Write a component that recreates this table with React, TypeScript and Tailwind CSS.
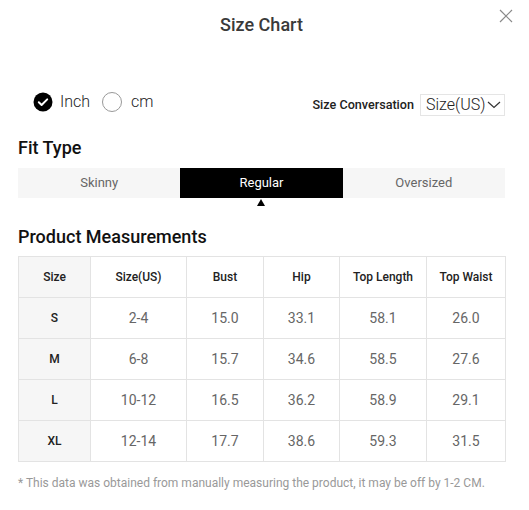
import React from "react";

const rows = [
  ["S", "2-4", "15.0", "33.1", "58.1", "26.0"],
  ["M", "6-8", "15.7", "34.6", "58.5", "27.6"],
  ["L", "10-12", "16.5", "36.2", "58.9", "29.1"],
  ["XL", "12-14", "17.7", "38.6", "59.3", "31.5"],
];
const headers = ["Size", "Size(US)", "Bust", "Hip", "Top Length", "Top Waist"];
const widths = ["w-[72px]", "w-[96px]", "w-[77px]", "w-[76px]", "w-[87px]", "w-[79px]"];

export default function App() {
  return (
    <div className="relative w-[529px] h-[510px] bg-white overflow-hidden font-['Roboto',sans-serif]">
      <button className="absolute left-[499px] top-[9px] w-[14px] h-[14px]">
        <svg width="14" height="14" viewBox="0 0 14 14" fill="none" stroke="#8a8a8a" strokeWidth="1.2">
          <path d="M1 1 L13 13 M13 1 L1 13" />
        </svg>
      </button>
      <div className="pl-[18px] w-[505px]">
        <h1 className="mt-[13px] text-center text-[18px] leading-[24px] font-medium text-[#3a3a3a]">Size Chart</h1>

        <div className="mt-[54px] h-[25px] flex justify-between">
          <div className="flex items-center h-[21px] pl-[15px]">
            <svg width="20" height="20" viewBox="0 0 20 20">
              <circle cx="10" cy="10" r="9.5" fill="#000" />
              <path d="M5.8 10.3 L8.6 13 L14.2 7.4" fill="none" stroke="#fff" strokeWidth="2" strokeLinecap="round" strokeLinejoin="round" />
            </svg>
            <span className="ml-[7px] text-[16px] font-light text-[#222] leading-[20px]">Inch</span>
            <span className="ml-[12px] w-[20px] h-[20px] rounded-full border border-[#999]" />
            <span className="ml-[9px] text-[16px] font-light text-[#222] leading-[20px]">cm</span>
          </div>
          <div className="flex items-center mt-[3px] h-[22px]">
            <span className="text-[12.6px] font-medium text-[#222] leading-[16px]">Size Conversation</span>
            <div className="ml-[6px] h-[22px] w-[85px] border border-[#e5e5e5] flex items-center pl-[5px]">
              <span className="text-[16px] font-light text-[#222] leading-[20px]">Size(US)</span>
              <svg className="ml-[2px]" width="14" height="8" viewBox="0 0 14 8" fill="none" stroke="#333" strokeWidth="1.2">
                <path d="M1 1 L7 6.5 L13 1" />
              </svg>
            </div>
          </div>
        </div>

        <h2 className="mt-[20px] text-[18px] leading-[24px] font-medium text-[#111]">Fit Type</h2>
        <div className="mt-[8px] grid grid-cols-3 h-[30px] text-[13px]">
          <div className="bg-[#f6f6f6] text-[#666] flex items-center justify-center">Skinny</div>
          <div className="bg-black text-white flex items-center justify-center">Regular</div>
          <div className="bg-[#f6f6f6] text-[#666] flex items-center justify-center">Oversized</div>
        </div>
        <div className="grid grid-cols-3 h-[8px]">
          <div />
          <div className="flex justify-center pt-[1px]">
            <div className="w-0 h-0 border-l-[4px] border-r-[4px] border-b-[7px] border-l-transparent border-r-transparent border-b-black" />
          </div>
          <div />
        </div>

        <h2 className="mt-[19px] text-[18px] leading-[24px] font-medium text-[#111]">Product Measurements</h2>
        <table className="mt-[7px] border-collapse w-[487px] table-fixed">
          <thead>
            <tr className="h-[41px]">
              {headers.map((h, i) => (
                <th
                  key={h}
                  className={`${widths[i]} border border-[#e3e3e3] text-[12px] font-medium text-[#222] ${i === 0 ? "bg-[#f6f6f6]" : ""}`}
                >
                  {h}
                </th>
              ))}
            </tr>
          </thead>
          <tbody>
            {rows.map((r) => (
              <tr key={r[0]} className="h-[41px]">
                {r.map((c, i) => (
                  <td
                    key={i}
                    className={
                      i === 0
                        ? "border border-[#e3e3e3] bg-[#f6f6f6] text-center text-[12px] font-medium text-[#222]"
                        : "border border-[#e3e3e3] text-center text-[14px] text-[#666]"
                    }
                  >
                    {c}
                  </td>
                ))}
              </tr>
            ))}
          </tbody>
        </table>

        <p className="mt-[13px] text-[12px] leading-[16px] text-[#999]">
          * This data was obtained from manually measuring the product, it may be off by 1-2 CM.
        </p>
        <div className="mt-[19px] border-t border-[#ececec]" />
      </div>
    </div>
  );
}
